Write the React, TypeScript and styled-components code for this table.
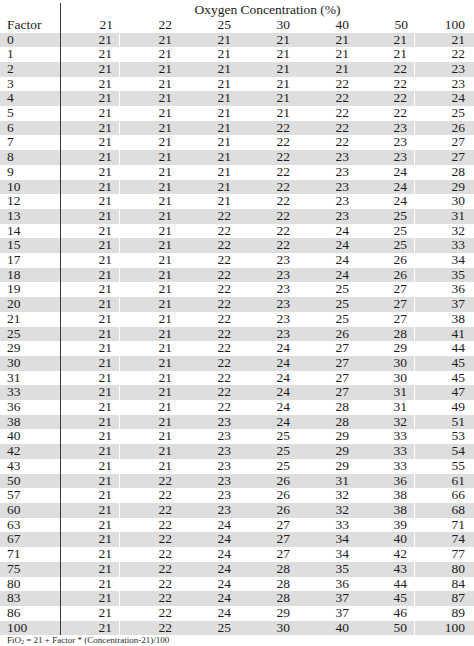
import styled, { createGlobalStyle } from "styled-components";
import { FC } from "react";

const GlobalStyle = createGlobalStyle`
  html, body {
    margin: 0;
    padding: 0;
    background: #ffffff;
  }
`;

const Page = styled.div`
  width: 474px;
  height: 646px;
  overflow: hidden;
  padding-top: 3px;
  box-sizing: border-box;
  font-family: "Liberation Serif", "Times New Roman", serif;
  color: #1c1c1c;
`;

const Row = styled.div<{ $shade?: boolean; $height?: number }>`
  display: grid;
  grid-template-columns: 61px repeat(7, 1fr);
  height: ${(p) => p.$height ?? 14.71}px;
  line-height: ${(p) => p.$height ?? 14.71}px;
  background-color: ${(p) => (p.$shade ? "#dedede" : "#ffffff")};
  font-size: 13.5px;
`;

const FactorCell = styled.div`
  box-sizing: border-box;
  padding-left: 7px;
  border-right: 1.5px solid #3a3a3a;
  white-space: nowrap;
`;

const ValueCell = styled.div<{ $last?: boolean; $split?: boolean }>`
  text-align: right;
  padding-right: ${(p) => (p.$last ? 9 : 7)}px;
  border-right: ${(p) => (p.$split ? "1px solid #ffffff" : "none")};
  white-space: nowrap;
`;

const SpanCell = styled.div`
  grid-column: 2 / span 7;
  text-align: center;
  white-space: nowrap;
`;

const Footnote = styled.div`
  padding-left: 7px;
  font-size: 9px;
  line-height: 10px;
  color: #2a2a2a;
  white-space: nowrap;
`;

const concentrations = [21, 22, 25, 30, 40, 50, 100];

const table: number[][] = [
  [0, 21, 21, 21, 21, 21, 21, 21],
  [1, 21, 21, 21, 21, 21, 21, 22],
  [2, 21, 21, 21, 21, 21, 22, 23],
  [3, 21, 21, 21, 21, 22, 22, 23],
  [4, 21, 21, 21, 21, 22, 22, 24],
  [5, 21, 21, 21, 21, 22, 22, 25],
  [6, 21, 21, 21, 22, 22, 23, 26],
  [7, 21, 21, 21, 22, 22, 23, 27],
  [8, 21, 21, 21, 22, 23, 23, 27],
  [9, 21, 21, 21, 22, 23, 24, 28],
  [10, 21, 21, 21, 22, 23, 24, 29],
  [12, 21, 21, 21, 22, 23, 24, 30],
  [13, 21, 21, 22, 22, 23, 25, 31],
  [14, 21, 21, 22, 22, 24, 25, 32],
  [15, 21, 21, 22, 22, 24, 25, 33],
  [17, 21, 21, 22, 23, 24, 26, 34],
  [18, 21, 21, 22, 23, 24, 26, 35],
  [19, 21, 21, 22, 23, 25, 27, 36],
  [20, 21, 21, 22, 23, 25, 27, 37],
  [21, 21, 21, 22, 23, 25, 27, 38],
  [25, 21, 21, 22, 23, 26, 28, 41],
  [29, 21, 21, 22, 24, 27, 29, 44],
  [30, 21, 21, 22, 24, 27, 30, 45],
  [31, 21, 21, 22, 24, 27, 30, 45],
  [33, 21, 21, 22, 24, 27, 31, 47],
  [36, 21, 21, 22, 24, 28, 31, 49],
  [38, 21, 21, 23, 24, 28, 32, 51],
  [40, 21, 21, 23, 25, 29, 33, 53],
  [42, 21, 21, 23, 25, 29, 33, 54],
  [43, 21, 21, 23, 25, 29, 33, 55],
  [50, 21, 22, 23, 26, 31, 36, 61],
  [57, 21, 22, 23, 26, 32, 38, 66],
  [60, 21, 22, 23, 26, 32, 38, 68],
  [63, 21, 22, 24, 27, 33, 39, 71],
  [67, 21, 22, 24, 27, 34, 40, 74],
  [71, 21, 22, 24, 27, 34, 42, 77],
  [75, 21, 22, 24, 28, 35, 43, 80],
  [80, 21, 22, 24, 28, 36, 44, 84],
  [83, 21, 22, 24, 28, 37, 45, 87],
  [86, 21, 22, 24, 29, 37, 46, 89],
  [100, 21, 22, 25, 30, 40, 50, 100],
];

const App: FC = () => {
  return (
    <>
      <GlobalStyle />
      <Page>
        <Row $height={14.75}>
          <FactorCell />
          <SpanCell>Oxygen Concentration (%)</SpanCell>
        </Row>
        <Row $height={14.75}>
          <FactorCell>Factor</FactorCell>
          {concentrations.map((c, i) => (
            <ValueCell key={c} $last={i === 6}>
              {c}
            </ValueCell>
          ))}
        </Row>
        {table.map((row, index) => (
          <Row key={row[0]} $shade={index % 2 === 0}>
            <FactorCell>{row[0]}</FactorCell>
            {row.slice(1).map((v, i) => (
              <ValueCell key={i} $last={i === 6} $split={i === 0 || i === 5}>
                {v}
              </ValueCell>
            ))}
          </Row>
        ))}
        <Footnote>
          FiO<sub style={{ fontSize: "6px", verticalAlign: "-1px" }}>2</sub> = 21 + Factor *
          (Concentration-21)/100
        </Footnote>
      </Page>
    </>
  );
};

export default App;
